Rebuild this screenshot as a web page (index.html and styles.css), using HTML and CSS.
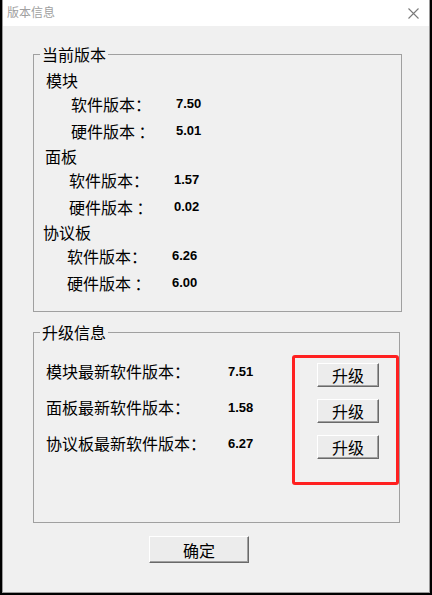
FILE: index.html
```html
<!DOCTYPE html>
<html lang="zh-CN">
<head>
<meta charset="utf-8">
<title>版本信息</title>
<link rel="stylesheet" href="styles.css">
</head>
<body>
<div class="win">
  <div class="titlebar">
    <span class="title">版本信息</span>
    <svg class="close" width="11" height="11" viewBox="0 0 11 11"><path d="M0.5 0.5 L10.5 10.5 M10.5 0.5 L0.5 10.5" stroke="#7a7a7a" stroke-width="1.1" fill="none"/></svg>
  </div>
  <div class="client">
    <fieldset class="group g1">
      <legend>当前版本</legend>
      <div class="sec s1">
        <div class="head">模块</div>
        <div class="item"><span class="lab">软件版本：</span><span class="val">7.50</span></div>
        <div class="item hw"><span class="lab">硬件版本 ：</span><span class="val">5.01</span></div>
      </div>
      <div class="sec s2">
        <div class="head">面板</div>
        <div class="item"><span class="lab">软件版本：</span><span class="val">1.57</span></div>
        <div class="item hw"><span class="lab">硬件版本 ：</span><span class="val">0.02</span></div>
      </div>
      <div class="sec s3">
        <div class="head">协议板</div>
        <div class="item"><span class="lab">软件版本：</span><span class="val">6.26</span></div>
        <div class="item hw"><span class="lab">硬件版本 ：</span><span class="val">6.00</span></div>
      </div>
    </fieldset>
    <fieldset class="group g2">
      <legend>升级信息</legend>
      <div class="uprows">
        <div class="uplist">
          <div class="uprow"><span class="ulab">模块最新软件版本：</span><span class="val">7.51</span></div>
          <div class="uprow"><span class="ulab">面板最新软件版本：</span><span class="val">1.58</span></div>
          <div class="uprow"><span class="ulab">协议板最新软件版本：</span><span class="val">6.27</span></div>
        </div>
        <div class="btncol">
          <button class="btn up">升级</button>
          <button class="btn up">升级</button>
          <button class="btn up">升级</button>
          <div class="mark"></div>
        </div>
      </div>
    </fieldset>
    <div class="footer">
      <button class="btn ok">确定</button>
    </div>
  </div>
</div>
</body>
</html>
```
FILE: styles.css
```css
html, body {
  margin: 0;
  padding: 0;
}
body {
  background: #000;
  width: 432px;
  height: 595px;
  overflow: hidden;
  font-family: "Noto Sans CJK SC", "Liberation Sans", sans-serif;
  color: #000;
}
.win {
  margin-left: 2px;
  width: 426px;
  height: 592px;
  border: 1px solid #9a9a9a;
  border-top: none;
  background: #f0f0f0;
  display: flex;
  flex-direction: column;
}
.titlebar {
  height: 26px;
  background: #fff;
  display: flex;
  align-items: center;
  justify-content: space-between;
  padding: 0 10px 0 4px;
  flex: none;
}
.title {
  font-size: 12px;
  line-height: 14px;
  color: #a0a0a0;
  margin-top: -3px;
}
.close {
  margin-top: 1px;
}
.client {
  flex: 1;
  display: flex;
  flex-direction: column;
}
.group {
  margin: 0 0 0 30px;
  padding: 0;
  border: 1px solid #a0a0a0;
  min-width: 0;
}
.group legend {
  font-size: 16px;
  line-height: 16px;
  padding: 0 2px;
  margin-left: 6px;
}
.g1 {
  margin-top: 20px;
  width: 367px;
  height: 258px;
  padding-top: 6px;
}
.sec .head,
.sec .item {
  font-size: 16px;
  line-height: 24px;
  height: 24px;
  white-space: nowrap;
}
.sec .item {
  display: flex;
  margin-left: 24px;
}
.sec .item.hw {
  margin-top: 3px;
}
.sec + .sec {
  margin-top: 1px;
}
.s1 { padding-left: 12px; }
.s1 .item { margin-left: 25px; }
.s2 { padding-left: 11px; }
.s3 { padding-left: 9px; }
.lab {
  width: 105px;
  flex: none;
}
.val {
  font-family: "Liberation Sans", Arial, sans-serif;
  font-weight: bold;
  font-size: 13px;
}
.g2 {
  margin-top: 12px;
  width: 365px;
  padding: 23px 0 63px 0;
}
.uprows {
  display: flex;
}
.uplist {
  width: 283px;
  padding-left: 12px;
  box-sizing: border-box;
  display: flex;
  flex-direction: column;
  gap: 12px;
}
.uprow {
  height: 24px;
  display: flex;
  align-items: center;
  white-space: nowrap;
  font-size: 16px;
  margin-top: -4px;
  margin-bottom: 4px;
}
.ulab {
  width: 182px;
  flex: none;
}
.btncol {
  position: relative;
  display: flex;
  flex-direction: column;
  gap: 12px;
}
.btn {
  font-family: "Noto Sans CJK SC", sans-serif;
  font-size: 16px;
  color: #000;
  background: #ececec;
  border-style: solid;
  border-width: 1px;
  border-color: #fff #696969 #696969 #fff;
  box-shadow: inset -1px -1px 0 #a0a0a0;
  padding: 0;
  margin: 0;
  display: flex;
  align-items: center;
  justify-content: center;
  line-height: 1;
}
.up {
  width: 62px;
  height: 24px;
}
.mark {
  position: absolute;
  left: -25px;
  top: -8px;
  right: -20px;
  bottom: -26px;
  border: 3px solid #ff2020;
  border-radius: 3px;
}
.footer {
  padding: 13px 0 0 146px;
}
.ok {
  width: 100px;
  height: 27px;
}
```
